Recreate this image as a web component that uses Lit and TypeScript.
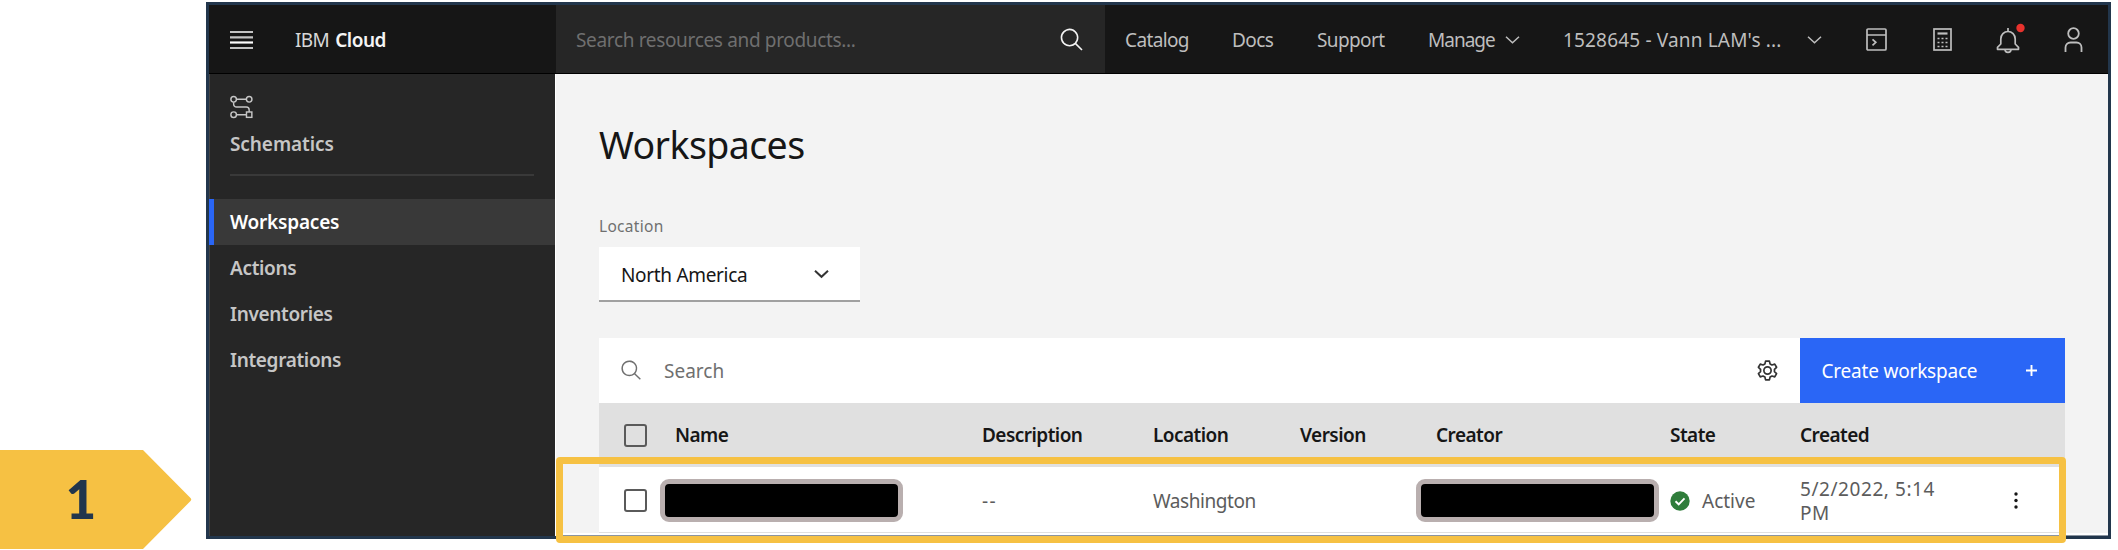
import { LitElement, html, css } from "lit";
import { customElement } from "lit/decorators.js";

const NAV = ["Workspaces", "Actions", "Inventories", "Integrations"];
const COLUMNS = ["Name", "Description", "Location", "Version", "Creator", "State", "Created"];

const magnifier = (cls: string) => html`<svg class=${cls} viewBox="0 0 32 32" fill="currentColor"><path d="M29 27.6 21.4 20a11 11 0 1 0-1.4 1.4l7.6 7.6zM4 13a9 9 0 1 1 9 9 9 9 0 0 1-9-9z"/></svg>`;
const chevron = (cls: string) => html`<svg class="chev ${cls}" viewBox="0 0 15 8" fill="none" stroke="currentColor"><path d="M1 .8l6.500 6L14 .8"/></svg>`;

@customElement("app-root")
export class AppRoot extends LitElement {
  static styles = css`
    :host { display: block; width: 2118px; height: 550px; position: relative; overflow: hidden; background: #fff;
      font-family: "Noto Sans", sans-serif; font-size: 19px; line-height: 26px; color: #161616; }
    * { box-sizing: border-box; }
    svg { display: block; flex: none; overflow: visible; }
    .page { padding: 2px 0 0 206px; }
    .frame { width: 1905px; height: 537px; border: 3px solid #22364c; border-top-width: 3.5px; background: #f3f3f3; display: flex; flex-direction: column; overflow: hidden; }
    .header { height: 69px; padding-top: 1px; flex: none; display: flex; background: #161616; color: #bebebe; border-bottom: 1px solid #000; white-space: nowrap; }
    .brand { width: 347px; display: flex; align-items: center; padding-left: 21px; color: #f4f4f4; }
    .burger { width: 23px; height: 20px; margin-right: 42px; color: #c4c4c4; }
    .brand b { font-weight: 600; letter-spacing: -.5px; }
    .ibm { margin-right: 6px; letter-spacing: -.6px; color: #d8d8d8; }
    .find { width: 549px; margin-top: -1px; padding: 1px 21px 0 20px; background: #262626; display: flex; align-items: center; justify-content: space-between; color: #6f6f6f; letter-spacing: -.34px; }
    .mag-lg { width: 26px; height: 26px; color: #f4f4f4; margin-right: -1px; }
    .links { display: flex; align-items: center; padding-left: 20px; letter-spacing: -.62px; }
    .l0 { width: 107px; } .l1 { width: 85px; } .l2 { width: 111px; } .l3 { width: 77px; letter-spacing: -1px; }
    .chev { width: 15px; height: 8px; stroke-width: 1.5; }
    .c1 { margin-right: 43px; }
    .acct { width: 244px; letter-spacing: .17px; }
    .c2 { margin-right: 44px; }
    .i-term { width: 21px; height: 23px; margin-right: 46px; }
    .i-calc { width: 19px; height: 23px; margin-right: 44px; }
    .i-bell { width: 25px; height: 30px; margin-right: 43px; }
    .i-user { width: 19px; height: 25px; }
    .body { flex: 1; display: flex; min-height: 0; }
    .side { width: 346px; background: #262626; color: #c6c6c6; font-weight: 600; border-left: 1px solid #444; flex: none; letter-spacing: -.34px; }
    .brandbox { margin: 21px 21px 0 20px; height: 81px; border-bottom: 2px solid #393939; letter-spacing: -.08px; }
    .schem { width: 23px; height: 24px; margin-bottom: 12px; }
    .nav { margin-top: 23px; margin-left: -1px; }
    .item { height: 46px; display: flex; align-items: center; padding-left: 16px; border-left: 5px solid transparent; }
    .item.on { background: #393939; border-left-color: #2a66f6; color: #fff; letter-spacing: -.2px; }
    .main { flex: 1; padding: 0 43px 0 43px; display: flex; flex-direction: column; min-width: 0; border-left: 1px solid #fff; }
    h1 { margin: 44px 0 0; font-weight: 400; font-size: 37.5px; line-height: 54px; height: 54px; letter-spacing: -.6px; }
    .label { font-size: 15.5px; line-height: 22px; color: #6f6f6f; margin-top: 43px; letter-spacing: .3px; }
    .select { width: 261px; height: 55px; margin-top: 10px; background: #fff; border-bottom: 2px solid #a0a0a0; display: flex; align-items: center; justify-content: space-between; padding: 2px 31px 0 22px; letter-spacing: -.32px; }
    .select .chev { stroke-width: 2; color: #333; margin-top: -2px; }
    .toolbar { margin-top: 36px; height: 65px; background: #fff; display: flex; align-items: center; flex: none; }
    .mag-sm { width: 23px; height: 23px; margin-left: 21px; color: #6f6f6f; }
    .q { margin-left: 21px; color: #6f6f6f; flex: 1; }
    .gear { width: 21px; height: 21px; margin-right: 22px; color: #333; }
    .create { width: 265px; height: 65px; background: #2a66f6; color: #fff; display: flex; align-items: center; justify-content: space-between; padding: 0 28px 0 21.5px; letter-spacing: -.2px; }
    .plus { width: 11px; height: 11px; margin-top: -1px; }
    .row { display: grid; grid-template-columns: 76px 307px 171px 147px 136px 234px 130px 193px 1fr; align-items: center; }
    .thead { height: 64px; background: #e0e0e0; font-weight: 600; flex: none; letter-spacing: -.54px; }
    .tr { height: 66px; padding-top: 2px; background: #fff; color: #5c5c5c; border-bottom: 1px solid #e0e0e0; flex: none; }
    .box { width: 23px; height: 23px; border: 2px solid #5a5a5a; border-radius: 3px; margin-left: 25px; }
    .redact { width: 243px; height: 43px; margin-left: -15px; border: 5.5px solid #b9afaf; border-radius: 9px; background: #000; }
    .redact.two { margin-left: -20px; }
    .dash { letter-spacing: 1.4px; }
    .place { letter-spacing: -.45px; }
    .state { display: flex; align-items: center; gap: 12px; }
    .ok { width: 20px; height: 20px; }
    .date { line-height: 24px; width: 150px; letter-spacing: .56px; }
    .dots { width: 4px; height: 17px; margin-left: 21px; color: #161616; }
    .foot { flex: 1; background: #fff; margin: 0 -43px; border-bottom: 1px solid #8a94a0; }
    .hl { position: absolute; left: 556px; top: 457px; width: 1510px; height: 86px; border: 7px solid #f6c143; border-radius: 4px; }
    .tag { position: absolute; left: 0; top: 450px; width: 192px; height: 100px; }
    .num { position: absolute; left: 65.5px; top: 467px; font: 900 53px/64px Lato, sans-serif; color: #22364c; }
  `;
  render() {
    return html`
      <div class="page"><div class="frame">
        <div class="header">
          <div class="brand">
            <svg class="burger" viewBox="0 0 23 20" stroke="currentColor" stroke-width="2.2"><path d="M0 2h23M0 7.300h23M0 18h23"/><path d="M0 12.500h23" stroke="#fff"/></svg>
            <span class="ibm">IBM</span><b>Cloud</b>
          </div>
          <div class="find"><span>Search resources and products...</span>${magnifier("mag-lg")}</div>
          <div class="links">
            <span class="l0">Catalog</span><span class="l1">Docs</span><span class="l2">Support</span><span class="l3">Manage</span>${chevron("c1")}
            <span class="acct">1528645 - Vann LAM's ...</span>${chevron("c2")}
            <svg class="i-term" viewBox="0 0 21 23" fill="none" stroke="currentColor" stroke-width="1.7"><rect x="1" y="1" width="19" height="21" rx="1"/><path d="M1 7h19M6.500 11.300l3.300 3-3.300 3"/></svg>
            <svg class="i-calc" viewBox="0 0 19 23" fill="none" stroke="currentColor" stroke-width="1.7"><rect x="1" y="1" width="17" height="21"/><path d="M4.500 5.500h10" stroke-width="2.2"/><path d="M4.500 10.500h10M4.500 14.500h10M4.500 18.500h10" stroke-dasharray="2 2"/></svg>
            <svg class="i-bell" viewBox="0 0 25 30" fill="none" stroke="currentColor" stroke-width="1.7" stroke-linejoin="round"><path d="M12 3v3.500M4.800 19v-5a7.200 7.500 0 0 1 14.400 0v5l3.300 3.300v2H1.500v-2zM9 24.500a3 2.800 0 0 0 6 0"/><circle cx="24.500" cy="3" r="4.200" fill="#e8322d" stroke="none"/></svg>
            <svg class="i-user" viewBox="0 0 19 25" fill="none" stroke="currentColor" stroke-width="1.800"><circle cx="9.500" cy="6.500" r="5.300"/><path d="M1.500 25v-4.500a5 5 0 0 1 5-5h6a5 5 0 0 1 5 5V25"/></svg>
          </div>
        </div>
        <div class="body">
          <div class="side">
            <div class="brandbox">
              <svg class="schem" viewBox="0 0 24 24" fill="none" stroke="currentColor" stroke-width="1.500"><circle cx="3.800" cy="4" r="2.900"/><circle cx="20" cy="4" r="2.900"/><circle cx="3.800" cy="20" r="2.900"/><rect x="17.200" y="17.200" width="5.600" height="5.600"/><path d="M6.700 4h10.400M6.700 20h10.500M3.800 7v2a3 3 0 0 0 3 3H17a3 3 0 0 1 3 3v2.200"/></svg>
              <span>Schematics</span>
            </div>
            <div class="nav">${NAV.map((n, i) => html`<div class="item ${i === 0 ? "on" : ""}"><span>${n}</span></div>`)}</div>
          </div>
          <div class="main">
            <h1>Workspaces</h1>
            <div class="label">Location</div>
            <div class="select"><span>North America</span>${chevron("")}</div>
            <div class="toolbar">
              ${magnifier("mag-sm")}<span class="q">Search</span>
              <svg class="gear" viewBox="0 0 22 22" fill="none" stroke="currentColor" stroke-width="1.800" stroke-linejoin="round"><circle cx="11" cy="11" r="3.800"/><path d="M9 1.200h4l.7 2.900 2 1.100 2.900-.9 1.900 3.300-2.200 2.100v2.500l2.200 2.100-1.900 3.400-2.900-.9-2 1.100-.7 2.900H9l-.7-2.900-2-1.100-2.900.9-1.900-3.400 2.200-2.100V9.700L1.500 7.600l1.900-3.300 2.900.9 2-1.100z"/></svg>
              <div class="create"><span>Create workspace</span><svg class="plus" viewBox="0 0 11 11" stroke="currentColor" stroke-width="1.900"><path d="M5.500 0v11M0 5.500h11"/></svg></div>
            </div>
            <div class="row thead"><span class="box"></span>${COLUMNS.map((c) => html`<span>${c}</span>`)}</div>
            <div class="row tr">
              <span class="box"></span><span class="redact"></span><span class="dash">--</span><span class="place">Washington</span><span></span><span class="redact two"></span>
              <span class="state"><svg class="ok" viewBox="0 0 20 20"><circle cx="10" cy="10" r="9.700" fill="#2f7d3b"/><path d="M5.500 10.300l3.200 3 5.800-6" fill="none" stroke="#fff" stroke-width="1.900"/></svg><span>Active</span></span>
              <span class="date">5/2/2022, 5:14<br>PM</span>
              <svg class="dots" viewBox="0 0 4 17" fill="currentColor"><circle cx="2" cy="2" r="1.700"/><circle cx="2" cy="8.500" r="1.700"/><circle cx="2" cy="15" r="1.700"/></svg>
            </div>
            <div class="foot"></div>
          </div>
        </div>
      </div></div>
      <div class="hl"></div>
      <svg class="tag" viewBox="0 0 192 100" fill="#f6c143"><path d="M0 0h143l47.500 48q1.500 1.500 0 3L143 99H0z"/></svg>
      <span class="num">1</span>
    `;
  }
}
